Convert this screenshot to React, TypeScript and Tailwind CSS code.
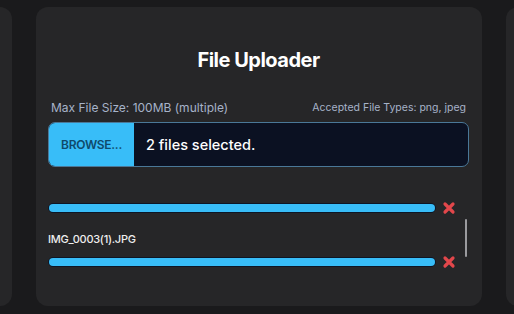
import { useState } from 'react'

const files = [
  { name: 'IMG_0002.JPG', progress: 100, hideName: true },
  { name: 'IMG_0003(1).JPG', progress: 100, hideName: false },
]

function RemoveIcon() {
  return (
    <svg width="14" height="14" viewBox="0 0 14 14" className="shrink-0">
      <path d="M3 3 L11 11 M11 3 L3 11" stroke="#e2474b" strokeWidth="3.2" strokeLinecap="round" />
    </svg>
  )
}

function SideCard() {
  return <div className="h-full w-[446px] shrink-0 rounded-xl bg-[#262628]" />
}

export default function App() {
  const [selected] = useState(files.length)

  return (
    <div
      className="flex h-[314px] w-full justify-center gap-[24px] overflow-hidden bg-[#1a1a1c] pb-[8px] pl-[4px] pt-[7px]"
      style={{ fontFamily: 'Inter, "Noto Sans", sans-serif' }}
    >
      <SideCard />

      {/* Uploader card */}
      <div className="flex h-full w-[446px] shrink-0 flex-col rounded-xl bg-[#262628] pl-[12px] pr-[13px] pt-[39px]">
        <h1 className="text-center text-[20px] font-bold leading-[28px] tracking-tight text-white">
          File Uploader
        </h1>

        <div className="mt-[26px] flex items-end justify-between px-[3px]">
          <span className="text-[12px] leading-[16px] text-[#a6b3c9]">Max File Size: 100MB (multiple)</span>
          <span className="text-[10.5px] leading-[16px] text-[#a6b3c9]">Accepted File Types: png, jpeg</span>
        </div>

        <div className="mt-[6px] flex h-[45px] overflow-hidden rounded-[7px] border-[1.5px] border-[#4a7898] bg-[#0b1122]">
          <div className="flex w-[85px] items-center justify-center bg-[#38bdf8] text-[12px] font-semibold tracking-tight text-[#0f4a6b]">
            BROWSE...
          </div>
          <div className="flex items-center pl-[12px] text-[14.5px] font-medium text-white">
            {selected} files selected.
          </div>
        </div>

        {/* File list */}
        <div className="mt-[34px] flex pr-[2px]">
          <div className="flex flex-1 flex-col gap-[16px] pr-[9px]">
            {files.map((f) => (
              <div key={f.name} className="flex flex-col gap-[8px]">
                {!f.hideName && (
                  <span className="text-[11px] font-medium leading-[16px] tracking-tight text-[#eeeeee]">{f.name}</span>
                )}
                <div className="flex items-center gap-[6px]">
                  <div className="h-[10px] flex-1 rounded-full border border-[#0d1626] bg-[#0d1626]">
                    <div className="h-full rounded-full bg-[#38bdf8]" style={{ width: `${f.progress}%` }} />
                  </div>
                  <RemoveIcon />
                </div>
              </div>
            ))}
          </div>
          <div className="mt-[18px] h-[38px] w-[2px] rounded-full bg-[#9a9a9e]" />
        </div>
      </div>

      <SideCard />
    </div>
  )
}
